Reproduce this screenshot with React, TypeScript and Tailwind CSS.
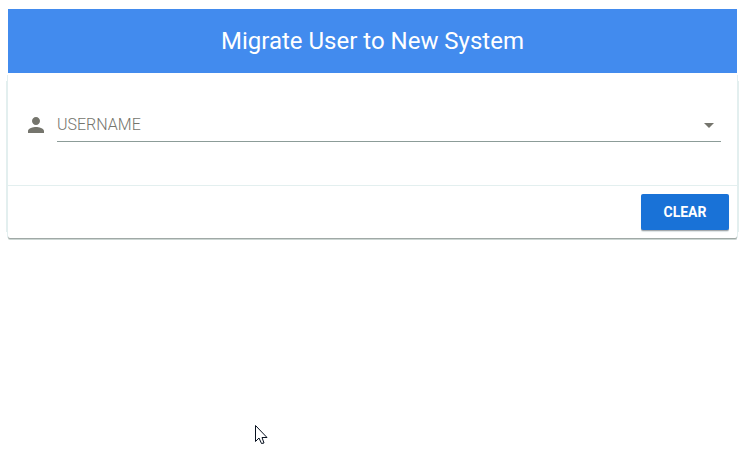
export default function App() {
  return (
    <div className="h-[456px] w-[744px] overflow-hidden bg-white pl-2 pt-[9px] font-['Roboto','Liberation_Sans',sans-serif]">
      <header className="flex h-16 w-[729px] items-center justify-center bg-[#428bee]">
        <h1 className="text-[24px] leading-8 font-normal text-white">Migrate User to New System</h1>
      </header>

      <main className="flex h-[165px] w-[729px] flex-col rounded-b-[2px] bg-white shadow-[0_1px_0_0_#a0a9a6,0_2px_0_0_#ccd6d3,1px_3px_0_-1px_#e3e9f0,-2px_1px_0_-1px_#e3efef,2px_1px_0_-1px_#e3efef,-9px_1px_0_-7px_#e3efef,9px_1px_0_-7px_#e3efef]">
        <div className="flex h-28 items-start pl-4 pr-4 pt-8">
          <svg className="mt-2 mr-[9px] size-6 shrink-0" viewBox="0 0 24 24" fill="#75756d">
            <path d="M12 12c2.21 0 4-1.79 4-4s-1.79-4-4-4-4 1.79-4 4 1.79 4 4 4zm0 2c-2.67 0-8 1.34-8 4v2h16v-2c0-2.66-5.33-4-8-4z" />
          </svg>
          <div className="flex h-[37px] flex-1 items-center border-b border-[#8c9c98]">
            <span className="mt-1 flex-1 text-[16px] leading-5 font-light text-[#75756d]">USERNAME</span>
            <svg className="mt-1 size-6" viewBox="0 0 24 24" fill="#75756d">
              <path d="M7 10l5 5 5-5z" />
            </svg>
          </div>
        </div>
        <footer className="flex h-[53px] items-center justify-end border-t border-[#e3efef] pr-2">
          <button className="h-9 w-[88px] rounded-[2px] bg-[#1972d7] text-[14px] font-bold text-white shadow-[0_1px_0_0_#a4a9ac,0_2px_1px_0_#dce3e5]">
            CLEAR
          </button>
        </footer>
      </main>

      <svg className="absolute left-[254px] top-[424px] h-[21px] w-[14px]" viewBox="0 0 14 21" aria-hidden="true">
        <path d="M1.5 1.5V17.5L5 14L7.5 19.5L10 19L8 13.5H13Z" fill="white" stroke="#07101f" strokeWidth="1" />
      </svg>
    </div>
  );
}
